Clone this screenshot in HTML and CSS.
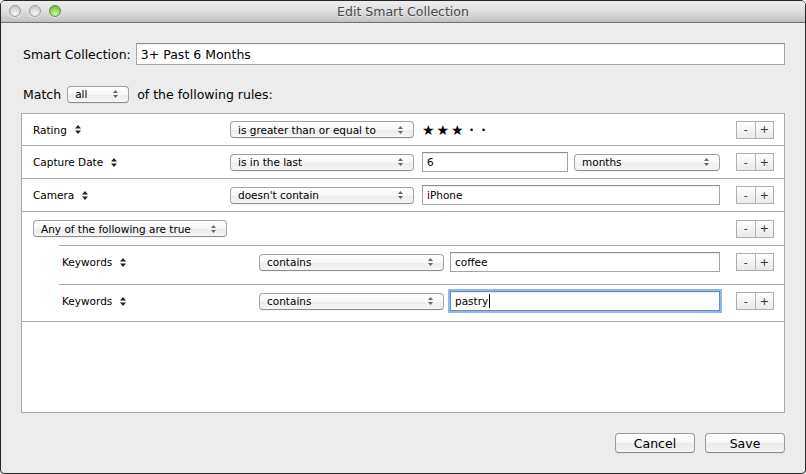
FILE: index.html
```html
<!DOCTYPE html>
<html>
<head>
<meta charset="utf-8">
<title>Edit Smart Collection</title>
<link rel="stylesheet" href="styles.css">
</head>
<body>
<div class="window">
  <div class="titlebar">
    <div class="lights">
      <span class="light grey"></span>
      <span class="light grey"></span>
      <span class="light green"></span>
    </div>
    <div class="title">Edit Smart Collection</div>
    <div></div>
  </div>
  <div class="content">
    <div class="name-row">
      <label class="name-label">Smart Collection:</label>
      <div class="field name-field">3+ Past 6 Months</div>
    </div>
    <div class="match-row">
      <span class="match-text">Match</span>
      <div class="popup match-popup"><span>all</span><svg class="arrows" width="5" height="8" viewBox="0 0 5 8"><path d="M2.5 0L5 3H0Z M0 5H5L2.5 8Z"/></svg></div>
      <span class="match-text">of the following rules:</span>
    </div>
    <div class="rules">
      <div class="rule r1">
        <div class="crit">Rating <svg class="chev" width="6" height="9" viewBox="0 0 6 9"><path d="M3 0L6 3.6H0Z M0 5.4H6L3 9Z"/></svg></div>
        <div class="popup op"><span>is greater than or equal to</span><svg class="arrows" width="5" height="8" viewBox="0 0 5 8"><path d="M2.5 0L5 3H0Z M0 5H5L2.5 8Z"/></svg></div>
        <div class="value stars"><span class="star">★</span><span class="star">★</span><span class="star">★</span><span class="dot">·</span><span class="dot">·</span></div>
        <div class="pm"><span>-</span><span>+</span></div>
      </div>
      <div class="rule r2">
        <div class="crit">Capture Date <svg class="chev" width="6" height="9" viewBox="0 0 6 9"><path d="M3 0L6 3.6H0Z M0 5.4H6L3 9Z"/></svg></div>
        <div class="popup op"><span>is in the last</span><svg class="arrows" width="5" height="8" viewBox="0 0 5 8"><path d="M2.5 0L5 3H0Z M0 5H5L2.5 8Z"/></svg></div>
        <div class="value split">
          <div class="field small-field num">6</div>
          <div class="popup unit"><span>months</span><svg class="arrows" width="5" height="8" viewBox="0 0 5 8"><path d="M2.5 0L5 3H0Z M0 5H5L2.5 8Z"/></svg></div>
        </div>
        <div class="pm"><span>-</span><span>+</span></div>
      </div>
      <div class="rule r3">
        <div class="crit">Camera <svg class="chev" width="6" height="9" viewBox="0 0 6 9"><path d="M3 0L6 3.6H0Z M0 5.4H6L3 9Z"/></svg></div>
        <div class="popup op"><span>doesn't contain</span><svg class="arrows" width="5" height="8" viewBox="0 0 5 8"><path d="M2.5 0L5 3H0Z M0 5H5L2.5 8Z"/></svg></div>
        <div class="value"><div class="field small-field grow">iPhone</div></div>
        <div class="pm"><span>-</span><span>+</span></div>
      </div>
      <div class="group">
        <div class="group-head">
          <div class="popup any"><span>Any of the following are true</span><svg class="arrows" width="5" height="8" viewBox="0 0 5 8"><path d="M2.5 0L5 3H0Z M0 5H5L2.5 8Z"/></svg></div>
          <div class="spacer"></div>
          <div class="pm"><span>-</span><span>+</span></div>
        </div>
        <div class="rule nested n1">
          <div class="crit">Keywords <svg class="chev" width="6" height="9" viewBox="0 0 6 9"><path d="M3 0L6 3.6H0Z M0 5.4H6L3 9Z"/></svg></div>
          <div class="popup op"><span>contains</span><svg class="arrows" width="5" height="8" viewBox="0 0 5 8"><path d="M2.5 0L5 3H0Z M0 5H5L2.5 8Z"/></svg></div>
          <div class="value"><div class="field small-field grow">coffee</div></div>
          <div class="pm"><span>-</span><span>+</span></div>
        </div>
        <div class="rule nested n2">
          <div class="crit">Keywords <svg class="chev" width="6" height="9" viewBox="0 0 6 9"><path d="M3 0L6 3.6H0Z M0 5.4H6L3 9Z"/></svg></div>
          <div class="popup op"><span>contains</span><svg class="arrows" width="5" height="8" viewBox="0 0 5 8"><path d="M2.5 0L5 3H0Z M0 5H5L2.5 8Z"/></svg></div>
          <div class="value"><div class="field small-field grow focus">pastry<span class="caret"></span></div></div>
          <div class="pm"><span>-</span><span>+</span></div>
        </div>
      </div>
    </div>
    <div class="actions">
      <button class="btn">Cancel</button>
      <button class="btn">Save</button>
    </div>
  </div>
</div>
</body>
</html>
```

FILE: styles.css
```css
* { box-sizing: border-box; }
html, body {
  margin: 0;
  padding: 0;
  background: #ffffff;
  font-family: "DejaVu Sans", "Liberation Sans", sans-serif;
}
.window {
  width: 806px;
  height: 474px;
  border: 1px solid #262626;
  border-radius: 5px 5px 4px 4px;
  background: #ececec;
  overflow: hidden;
  display: flex;
  flex-direction: column;
}
.titlebar {
  height: 22px;
  flex: none;
  border-bottom: 1px solid #707070;
  background: linear-gradient(to bottom, #eeeeee 0%, #e0e0e0 45%, #cdcdcd 80%, #c0c0c0 100%);
  display: grid;
  grid-template-columns: 1fr auto 1fr;
  align-items: center;
}
.lights {
  display: flex;
  gap: 8px;
  padding-left: 8px;
  padding-bottom: 1px;
}
.light {
  width: 12px;
  height: 12px;
  border-radius: 50%;
  display: block;
}
.light.grey {
  border: 1px solid #9d9d9d;
  background: radial-gradient(circle at 50% 75%, #f8f8f8 0%, #dedede 45%, #bdbdbd 100%);
  box-shadow: 0 1px 0 rgba(255,255,255,0.6);
}
.light.green {
  border: 1px solid #5a9a3a;
  background: radial-gradient(circle at 50% 75%, #d6f7a8 0%, #96da62 45%, #4fa829 100%);
  box-shadow: 0 1px 0 rgba(255,255,255,0.6);
}
.title {
  font-size: 12.5px;
  color: #474747;
  text-shadow: 0 1px 0 rgba(255,255,255,0.5);
  padding-bottom: 1px;
}
.content {
  flex: 1;
  display: flex;
  flex-direction: column;
  padding: 0 20px 20px 20px;
}
.name-row {
  margin-top: 20px;
  height: 22px;
  display: flex;
  align-items: center;
  gap: 5px;
  padding-left: 2px;
}
.name-label {
  font-size: 12.5px;
  color: #000;
}
.field {
  background: #fff;
  border: 1px solid #a4a4a4;
  border-top-color: #8f8f8f;
  box-shadow: inset 0 1px 1px rgba(0,0,0,0.08);
  display: flex;
  align-items: center;
  color: #000;
}
.name-field {
  flex: 1;
  height: 22px;
  font-size: 12.5px;
  padding-left: 4px;
}
.match-row {
  margin-top: 20px;
  height: 18px;
  display: flex;
  align-items: center;
  padding-left: 2px;
}
.match-text {
  font-size: 12.5px;
  color: #000;
}
.popup {
  height: 17px;
  border: 1px solid #a2a2a2;
  border-bottom-color: #8e8e8e;
  border-radius: 4px;
  background: linear-gradient(to bottom, #ffffff 0%, #f7f7f7 50%, #ececec 51%, #f5f5f5 100%);
  box-shadow: 0 1px 0 rgba(0,0,0,0.04);
  display: flex;
  align-items: center;
  justify-content: space-between;
  font-size: 10.5px;
  color: #000;
  padding: 0 10px 0 7px;
}
.arrows {
  display: block;
  fill: #666;
  flex: none;
}
.match-popup {
  width: 62px;
  margin: 0 8px 0 6px;
}
.rules {
  margin-top: 10px;
  height: 300px;
  border: 1px solid #a9a9a9;
  background: #fff;
  display: flex;
  flex-direction: column;
}
.rule {
  display: flex;
  align-items: center;
  border-bottom: 1px solid #a9a9a9;
  padding-right: 10px;
}
.r1 { height: 32px; }
.r2 { height: 33px; }
.r3 { height: 33px; }
.crit {
  width: 208px;
  flex: none;
  padding-left: 11px;
  font-size: 10.5px;
  color: #000;
  display: flex;
  align-items: center;
}
.chev {
  display: block;
  margin-left: 8px;
  fill: #222;
}
.op {
  width: 184px;
  flex: none;
}
.value {
  flex: 1;
  margin-left: 8px;
  margin-right: 16px;
  display: flex;
  align-items: center;
}
.split { gap: 6px; }
.small-field {
  height: 20px;
  font-size: 10.5px;
  padding-left: 4px;
}
.num { width: 146px; }
.unit { width: 146px; }
.grow { flex: 1; }
.stars {
  color: #000;
  height: 20px;
}
.star {
  width: 14.5px;
  display: inline-block;
  text-align: left;
  font-size: 14px;
  line-height: 1;
}
.dot {
  width: 12px;
  display: inline-block;
  text-align: center;
  font-size: 12px;
  font-weight: bold;
  line-height: 1;
}
.pm {
  width: 38px;
  height: 18px;
  flex: none;
  display: flex;
  border: 1px solid #aeaeae;
  background: linear-gradient(to bottom, #ffffff 0%, #f4f4f4 50%, #eaeaea 100%);
}
.pm span {
  flex: 1;
  display: flex;
  align-items: center;
  justify-content: center;
  font-size: 11px;
  color: #333;
  line-height: 1;
}
.pm span + span { border-left: 1px solid #b5b5b5; }
.group {
  display: flex;
  flex-direction: column;
  border-bottom: 1px solid #a9a9a9;
}
.group-head {
  height: 33px;
  display: flex;
  align-items: center;
  padding-left: 11px;
  padding-right: 10px;
}
.any { width: 194px; }
.spacer { flex: 1; }
.nested {
  margin-left: 37px;
  border-top: 1px solid #a9a9a9;
  border-bottom: none;
}
.nested .crit {
  width: 200px;
  padding-left: 3px;
}
.nested .op { width: 185px; }
.nested .value { margin-left: 6px; }
.n1 { height: 39px; padding-bottom: 6px; }
.n2 { height: 37px; padding-bottom: 4px; }
.focus {
  border: 1px solid #5b8fd3;
  box-shadow: 0 0 0 2px rgba(108, 160, 226, 0.75), inset 0 1px 1px rgba(0,0,0,0.08);
}
.caret {
  display: inline-block;
  width: 1px;
  height: 14px;
  background: #000;
  margin-left: 1px;
}
.actions {
  margin-top: 20px;
  display: flex;
  justify-content: flex-end;
  gap: 10px;
}
.btn {
  width: 80px;
  height: 20px;
  border: 1px solid #9c9c9c;
  border-bottom-color: #8a8a8a;
  border-radius: 4px;
  background: linear-gradient(to bottom, #ffffff 0%, #f6f6f6 50%, #ececec 51%, #f3f3f3 100%);
  box-shadow: 0 1px 0 rgba(0,0,0,0.05);
  font-family: "DejaVu Sans", "Liberation Sans", sans-serif;
  font-size: 12.5px;
  color: #000;
  padding: 0;
}
```
